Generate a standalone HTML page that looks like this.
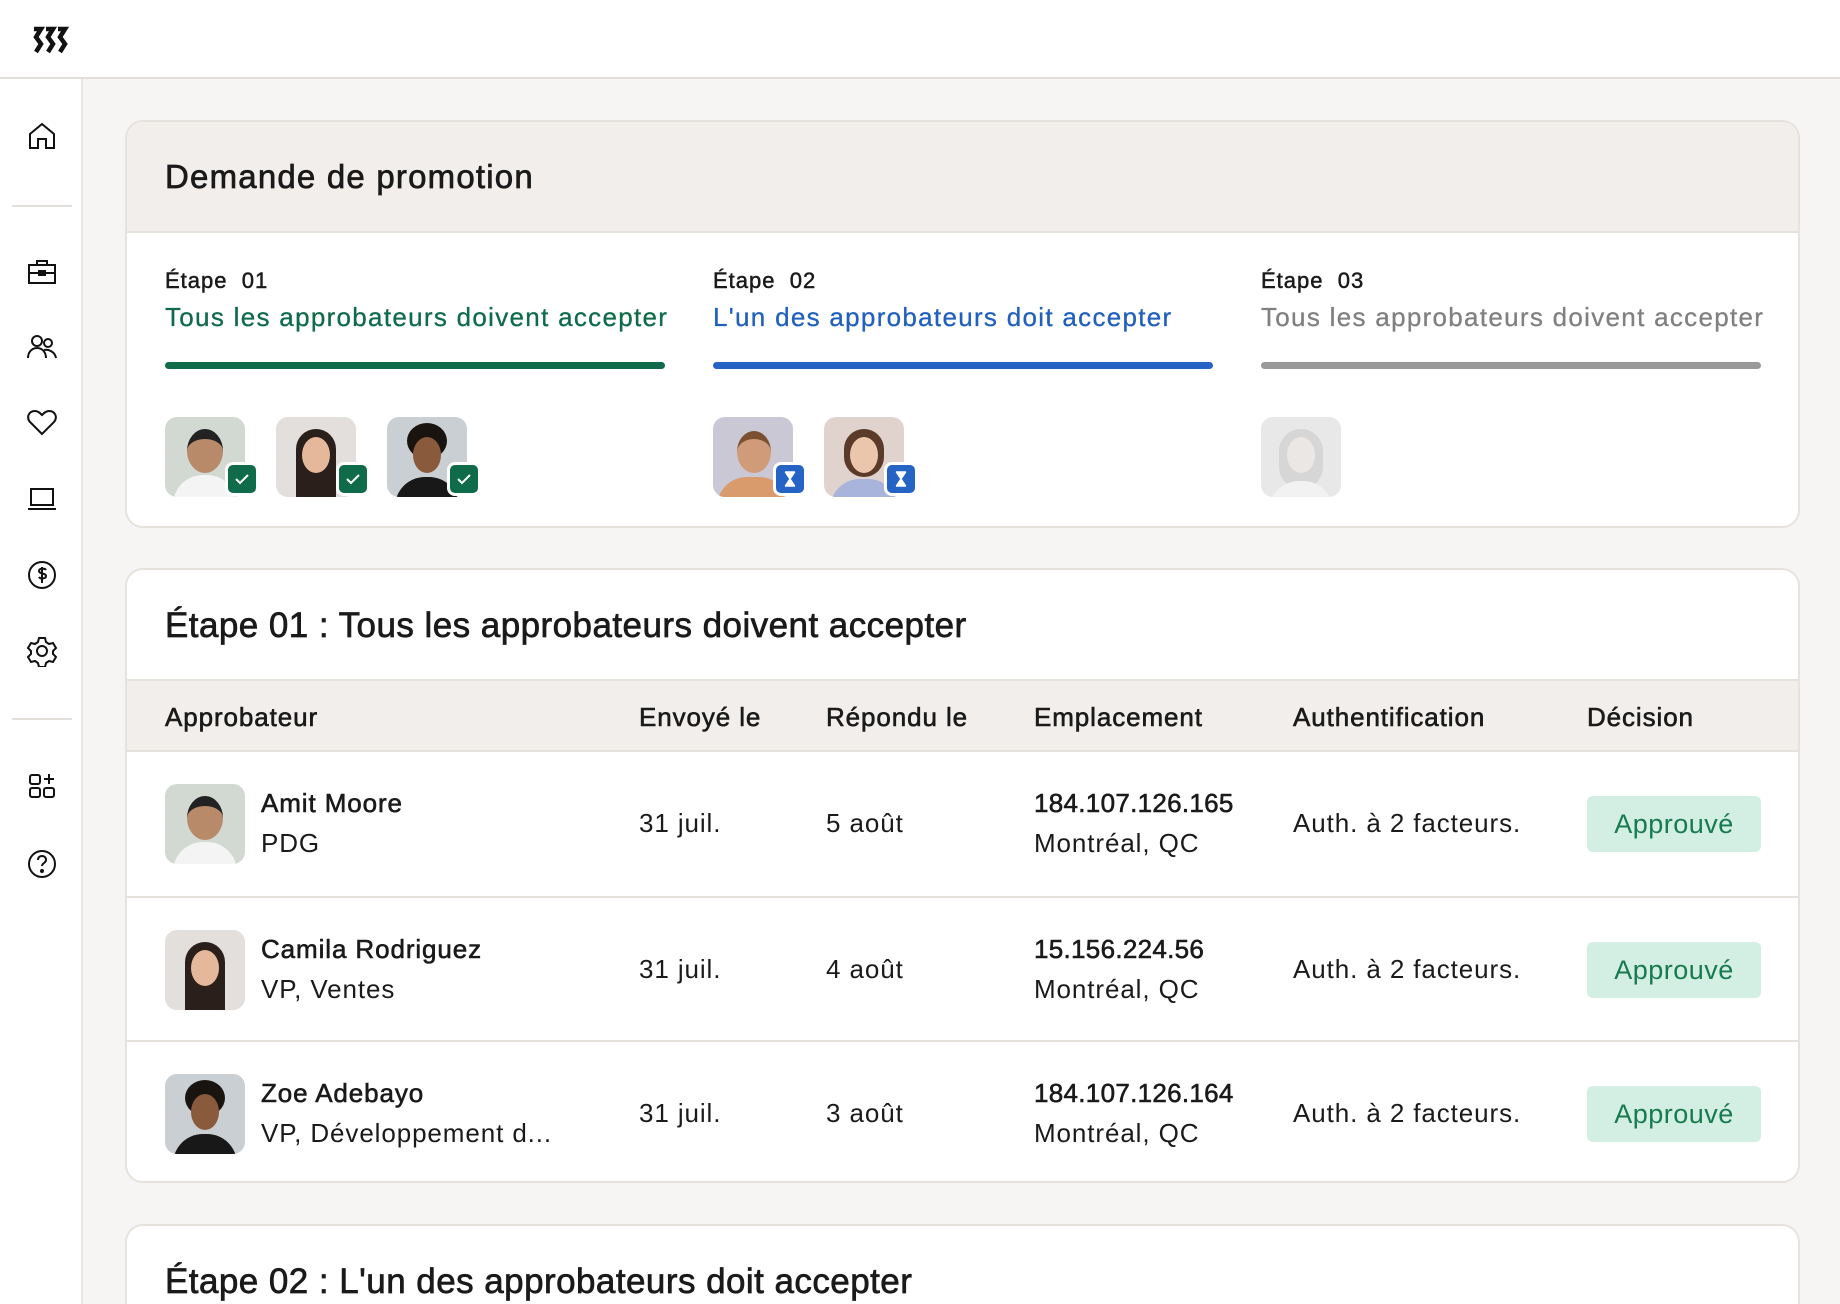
<!DOCTYPE html>
<html style="overflow:hidden;width:1840px;height:1304px"><head><meta charset="utf-8"><style>
*{box-sizing:border-box;margin:0;padding:0}
body{width:1840px;height:1304px;overflow:hidden;background:#f6f5f3;font-family:"Liberation Sans",sans-serif;color:#1a1a1a;position:relative;letter-spacing:0.7px}
.top{position:absolute;left:0;top:0;width:1840px;height:79px;background:#fff;border-bottom:2px solid #e2dfdb}
.side{position:absolute;left:0;top:79px;width:83px;height:1225px;background:#fff;border-right:2px solid #e8e5e1}
.ic{position:absolute;left:26px;width:32px;height:32px}
.div{position:absolute;left:12px;width:60px;height:2px;background:#e2dfdb}
.card{position:absolute;left:125px;width:1675px;background:#fff;border:2px solid #e6e2dd;border-radius:18px;overflow:hidden}
.h1{font-size:33px;position:absolute;left:38px;-webkit-text-stroke:0.7px #1a1a1a;letter-spacing:1.2px}
.h2{font-size:35px;letter-spacing:0.45px}
.lab{position:absolute;font-size:22px;-webkit-text-stroke:0.5px #1a1a1a;letter-spacing:1px}
.sub{position:absolute;font-size:26px;letter-spacing:1.3px;-webkit-text-stroke:0.3px currentColor}
.bar{position:absolute;height:7px;width:500px;border-radius:4px}
.av{position:absolute;width:80px;height:80px;border-radius:12px;overflow:hidden}
.badge{position:absolute;width:34px;height:34px;border-radius:8px;border:3px solid #fff}
.th{position:absolute;font-size:26px;top:21px;-webkit-text-stroke:0.6px #1a1a1a;letter-spacing:0.9px}
.td{position:absolute;font-size:26px;letter-spacing:0.9px}
.b{-webkit-text-stroke:0.6px #1a1a1a}
.num{letter-spacing:0.3px}
.pill{position:absolute;left:1460px;width:174px;height:56px;background:#d3eee3;border-radius:6px;color:#177a50;font-size:27px;text-align:center;line-height:56px;letter-spacing:0.5px}
.row{position:absolute;left:0;width:100%;height:144px;border-top:2px solid #e6e2dd}
</style></head><body>
<div class="top">
<svg style="position:absolute;left:31px;top:26px" width="38" height="28" viewBox="0 0 38 28"><g fill="none" stroke="#111" stroke-width="4.5"><path d="M3 3h7l-5 8 5 7-5 8"/><path d="M15 3h7l-5 8 5 7-5 8"/><path d="M27 3h7l-5 8 5 7-5 8"/></g></svg>
</div>
<div class="side">
<svg class="ic" style="top:41px" viewBox="0 0 32 32" fill="none" stroke="#111" stroke-width="2"><path d="M4 14L16 4l12 10v14h-8v-9h-8v9H4z"/></svg>
<div class="div" style="top:126px"></div>
<svg class="ic" style="top:177px" viewBox="0 0 32 32" fill="none" stroke="#111" stroke-width="2"><rect x="3" y="9" width="26" height="18"/><path d="M11 9V5h10v4M3 17h26"/><rect x="13" y="15" width="6" height="4"/></svg>
<svg class="ic" style="top:252px" viewBox="0 0 32 32" fill="none" stroke="#111" stroke-width="2"><circle cx="11" cy="10" r="5"/><circle cx="22" cy="12" r="4"/><path d="M2 27c0-6 4-10 9-10s9 4 9 10M18 19c5-1 11 2 12 8"/></svg>
<svg class="ic" style="top:327px" viewBox="0 0 32 32" fill="none" stroke="#111" stroke-width="2"><path d="M16 28L4 16C0 11 3 5 9 5c3 0 5 2 7 4 2-2 4-4 7-4 6 0 9 6 5 11z"/></svg>
<svg class="ic" style="top:404px" viewBox="0 0 32 32" fill="none" stroke="#111" stroke-width="2"><rect x="5" y="6" width="22" height="16"/><path d="M2 26h28"/></svg>
<svg class="ic" style="top:480px" viewBox="0 0 32 32" fill="none" stroke="#111" stroke-width="2"><circle cx="16" cy="16" r="13"/><path d="M20 11c-1-2-7-2-7 1s7 2 7 5-6 3-7 1M16 8v16"/></svg>
<svg class="ic" style="top:556px" viewBox="0 0 32 32" fill="none" stroke="#111" stroke-width="2"><circle cx="16" cy="16" r="5"/><path d="M13 3h6l1 4 3 2 4-1 3 5-3 3v3l3 3-3 5-4-1-3 2-1 4h-6l-1-4-3-2-4 1-3-5 3-3v-3l-3-3 3-5 4 1 3-2z"/></svg>
<div class="div" style="top:639px"></div>
<svg class="ic" style="top:691px" viewBox="0 0 32 32" fill="none" stroke="#111" stroke-width="2"><rect x="4" y="5" width="10" height="9" rx="2"/><rect x="4" y="18" width="10" height="9" rx="2"/><rect x="18" y="18" width="10" height="9" rx="2"/><path d="M23 4v10M18 9h10"/></svg>
<svg class="ic" style="top:769px" viewBox="0 0 32 32" fill="none" stroke="#111" stroke-width="2"><circle cx="16" cy="16" r="13"/><path d="M12 12c0-3 2-4 4-4s4 1 4 4-4 3-4 6"/><circle cx="16" cy="23" r="1" fill="#111"/></svg>
</div>

<div class="card" style="top:120px;height:408px">
<div style="position:absolute;left:0;top:0;width:100%;height:111px;background:#f1eeeb;border-bottom:2px solid #e6e2dd"></div>
<div class="h1" style="top:36px">Demande de promotion</div>
<div class="lab" style="left:38px;top:146px">Étape&nbsp; 01</div>
<div class="sub" style="left:38px;top:180px;color:#0f6b4a">Tous les approbateurs doivent accepter</div>
<div class="bar" style="left:38px;top:240px;background:#0f6b4a"></div>
<div class="lab" style="left:586px;top:146px">Étape&nbsp; 02</div>
<div class="sub" style="left:586px;top:180px;color:#2160bd">L'un des approbateurs doit accepter</div>
<div class="bar" style="left:586px;top:240px;background:#2563c4"></div>
<div class="lab" style="left:1134px;top:146px">Étape&nbsp; 03</div>
<div class="sub" style="left:1134px;top:180px;color:#808080">Tous les approbateurs doivent accepter</div>
<div class="bar" style="left:1134px;top:240px;background:#999"></div>

<div class="av" style="left:38px;top:295px;background:#d2d8d2"><div style="position:absolute;left:22px;top:12px;width:36px;height:44px;border-radius:50%;background:#b98a6a;border-top:10px solid #222"></div><div style="position:absolute;left:8px;top:58px;width:64px;height:30px;border-radius:30px 30px 0 0;background:#f4f4f4"></div></div>
<div class="badge" style="left:98px;top:340px;background:#0f6b4a"><svg width="28" height="28" viewBox="0 0 28 28"><path d="M8 14l4 4 8-8" fill="none" stroke="#fff" stroke-width="2"/></svg></div>
<div class="av" style="left:149px;top:295px;background:#e2dfdc"><div style="position:absolute;left:20px;top:12px;width:40px;height:70px;border-radius:20px 20px 0 0;background:#2a1f1a"></div><div style="position:absolute;left:26px;top:20px;width:28px;height:36px;border-radius:50%;background:#e5b89c"></div></div>
<div class="badge" style="left:209px;top:340px;background:#0f6b4a"><svg width="28" height="28" viewBox="0 0 28 28"><path d="M8 14l4 4 8-8" fill="none" stroke="#fff" stroke-width="2"/></svg></div>
<div class="av" style="left:260px;top:295px;background:#cacfd3"><div style="position:absolute;left:20px;top:6px;width:40px;height:36px;border-radius:50%;background:#1a1410"></div><div style="position:absolute;left:26px;top:20px;width:28px;height:36px;border-radius:50%;background:#8a5a3c"></div><div style="position:absolute;left:8px;top:60px;width:64px;height:30px;border-radius:30px 30px 0 0;background:#181818"></div></div>
<div class="badge" style="left:320px;top:340px;background:#0f6b4a"><svg width="28" height="28" viewBox="0 0 28 28"><path d="M8 14l4 4 8-8" fill="none" stroke="#fff" stroke-width="2"/></svg></div>

<div class="av" style="left:586px;top:295px;background:#c9c8d4"><div style="position:absolute;left:24px;top:14px;width:34px;height:42px;border-radius:50%;background:#d09b78;border-top:8px solid #7a5030"></div><div style="position:absolute;left:4px;top:60px;width:72px;height:30px;border-radius:30px 30px 0 0;background:#d99a6c"></div></div>
<div class="badge" style="left:646px;top:340px;background:#2563c4"><svg width="28" height="28" viewBox="0 0 28 28"><path d="M9 7h10M9 21h10M10 8l4 6-4 6h8l-4-6 4-6z" fill="#fff" stroke="#fff" stroke-width="1.5"/></svg></div>
<div class="av" style="left:697px;top:295px;background:#e0d2cc"><div style="position:absolute;left:20px;top:12px;width:40px;height:48px;border-radius:20px;background:#5a3a28"></div><div style="position:absolute;left:26px;top:20px;width:28px;height:36px;border-radius:50%;background:#ecc6ac"></div><div style="position:absolute;left:6px;top:62px;width:68px;height:30px;border-radius:30px 30px 0 0;background:#a8b4dc"></div></div>
<div class="badge" style="left:757px;top:340px;background:#2563c4"><svg width="28" height="28" viewBox="0 0 28 28"><path d="M9 7h10M9 21h10M10 8l4 6-4 6h8l-4-6 4-6z" fill="#fff" stroke="#fff" stroke-width="1.5"/></svg></div>
<div class="av" style="left:1134px;top:295px;background:#e8e8e8"><div style="position:absolute;left:18px;top:12px;width:44px;height:60px;border-radius:22px;background:#d6d6d6"></div><div style="position:absolute;left:26px;top:20px;width:28px;height:36px;border-radius:50%;background:#ebe7e5"></div><div style="position:absolute;left:8px;top:64px;width:64px;height:30px;border-radius:30px 30px 0 0;background:#f2f2f2"></div></div>
</div>

<div class="card" style="top:568px;height:615px">
<div class="h1 h2" style="top:36px">Étape 01 : Tous les approbateurs doivent accepter</div>
<div style="position:absolute;left:0;top:109px;width:100%;height:73px;background:#f1eeeb;border-top:2px solid #e6e2dd;border-bottom:2px solid #e6e2dd">
<div class="th" style="left:38px">Approbateur</div>
<div class="th" style="left:512px">Envoyé le</div>
<div class="th" style="left:699px">Répondu le</div>
<div class="th" style="left:907px">Emplacement</div>
<div class="th" style="left:1166px">Authentification</div>
<div class="th" style="left:1460px">Décision</div>
</div>
<div class="row" style="top:182px;border-top:none">
<div class="av" style="left:38px;top:32px;background:#d2d8d2"><div style="position:absolute;left:22px;top:12px;width:36px;height:44px;border-radius:50%;background:#b98a6a;border-top:10px solid #222"></div><div style="position:absolute;left:8px;top:58px;width:64px;height:30px;border-radius:30px 30px 0 0;background:#f4f4f4"></div></div>
<div class="td b" style="left:134px;top:36px">Amit Moore</div><div class="td" style="left:134px;top:76px">PDG</div>
<div class="td" style="left:512px;top:56px">31 juil.</div><div class="td" style="left:699px;top:56px">5 août</div>
<div class="td b num" style="left:907px;top:36px">184.107.126.165</div><div class="td" style="left:907px;top:76px">Montréal, QC</div>
<div class="td" style="left:1166px;top:56px">Auth. à 2 facteurs.</div><div class="pill" style="top:44px">Approuvé</div>
</div>
<div class="row" style="top:326px">
<div class="av" style="left:38px;top:32px;background:#e2dfdc"><div style="position:absolute;left:20px;top:12px;width:40px;height:70px;border-radius:20px 20px 0 0;background:#2a1f1a"></div><div style="position:absolute;left:26px;top:20px;width:28px;height:36px;border-radius:50%;background:#e5b89c"></div></div>
<div class="td b" style="left:134px;top:36px">Camila Rodriguez</div><div class="td" style="left:134px;top:76px">VP, Ventes</div>
<div class="td" style="left:512px;top:56px">31 juil.</div><div class="td" style="left:699px;top:56px">4 août</div>
<div class="td b num" style="left:907px;top:36px">15.156.224.56</div><div class="td" style="left:907px;top:76px">Montréal, QC</div>
<div class="td" style="left:1166px;top:56px">Auth. à 2 facteurs.</div><div class="pill" style="top:44px">Approuvé</div>
</div>
<div class="row" style="top:470px">
<div class="av" style="left:38px;top:32px;background:#cacfd3"><div style="position:absolute;left:20px;top:6px;width:40px;height:36px;border-radius:50%;background:#1a1410"></div><div style="position:absolute;left:26px;top:20px;width:28px;height:36px;border-radius:50%;background:#8a5a3c"></div><div style="position:absolute;left:8px;top:60px;width:64px;height:30px;border-radius:30px 30px 0 0;background:#181818"></div></div>
<div class="td b" style="left:134px;top:36px">Zoe Adebayo</div><div class="td" style="left:134px;top:76px">VP, Développement d...</div>
<div class="td" style="left:512px;top:56px">31 juil.</div><div class="td" style="left:699px;top:56px">3 août</div>
<div class="td b num" style="left:907px;top:36px">184.107.126.164</div><div class="td" style="left:907px;top:76px">Montréal, QC</div>
<div class="td" style="left:1166px;top:56px">Auth. à 2 facteurs.</div><div class="pill" style="top:44px">Approuvé</div>
</div>
</div>

<div class="card" style="top:1224px;height:80px;border-bottom:none;border-radius:18px 18px 0 0">
<div class="h1 h2" style="top:36px">Étape 02 : L'un des approbateurs doit accepter</div>
</div>
</body></html>
